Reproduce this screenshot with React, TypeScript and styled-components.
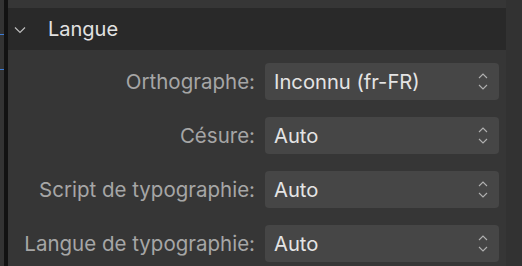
import React from "react";
import styled, { createGlobalStyle } from "styled-components";

const Global = createGlobalStyle`
  html, body { margin: 0; padding: 0; background: #333333; }
  body { font-family: Inter, "Noto Sans", sans-serif; -webkit-font-smoothing: antialiased; }
`;

const Page = styled.div`
  display: flex;
  width: 522px;
  height: 266px;
  overflow: hidden;
  background: #333333;
`;

const Gutter = styled.div`
  width: 4px;
  display: flex;
  flex-direction: column;
  padding-top: 34px;
  gap: 34px;
`;

const BlueLine = styled.div`
  width: 4px;
  height: 1px;
  background: #3b7bd6;
`;

const Divider = styled.div`
  width: 4px;
  background: #121212;
`;

const Panel = styled.div`
  width: 498px;
  background: #363636;
  padding-top: 8px;
  display: flex;
  flex-direction: column;
`;

const Header = styled.div`
  height: 42px;
  background: #292929;
  display: flex;
  align-items: center;
  gap: 22px;
  padding-left: 6px;
  color: #e2e2e2;
  font-size: 20px;
`;

const Rows = styled.div`
  display: flex;
  flex-direction: column;
  gap: 17px;
  padding-top: 13px;
`;

const Row = styled.div`
  display: grid;
  grid-template-columns: 247px 234px;
  column-gap: 10px;
  align-items: center;
  height: 37px;
`;

const Label = styled.div`
  text-align: right;
  color: #a6a6a6;
  font-size: 20.5px;
  white-space: nowrap;
`;

const Select = styled.div`
  height: 37px;
  background: #464646;
  border-radius: 4px;
  display: flex;
  align-items: center;
  justify-content: space-between;
  padding: 0 11px 0 9px;
  box-sizing: border-box;
  color: #e4e4e4;
  font-size: 20.2px;
`;

const RightStrip = styled.div`
  flex: 1;
  background: #323232;
`;

const Chevron = () => (
  <svg width="12" height="8" viewBox="0 0 12 8" style={{ marginTop: 1 }}>
    <path d="M1 1.5 L6 6.5 L11 1.5" fill="none" stroke="#bdbdbd" strokeWidth="1.2" />
  </svg>
);

const UpDown = () => (
  <svg width="10" height="20" viewBox="0 0 10 20">
    <path d="M1 6 L5 2 L9 6" fill="none" stroke="#b0b0b0" strokeWidth="1.1" />
    <path d="M1 13 L5 17 L9 13" fill="none" stroke="#b0b0b0" strokeWidth="1.1" />
  </svg>
);

const rows = [
  ["Orthographe:", "Inconnu (fr-FR)"],
  ["Césure:", "Auto"],
  ["Script de typographie:", "Auto"],
  ["Langue de typographie:", "Auto"],
];

export default function App() {
  return (
    <Page>
      <Global />
      <Gutter>
        <BlueLine />
        <BlueLine />
      </Gutter>
      <Divider />
      <Panel>
        <Header>
          <Chevron />
          <span>Langue</span>
        </Header>
        <Rows>
          {rows.map(([l, v]) => (
            <Row key={l}>
              <Label>{l}</Label>
              <Select>
                <span>{v}</span>
                <UpDown />
              </Select>
            </Row>
          ))}
        </Rows>
      </Panel>
      <RightStrip />
    </Page>
  );
}
